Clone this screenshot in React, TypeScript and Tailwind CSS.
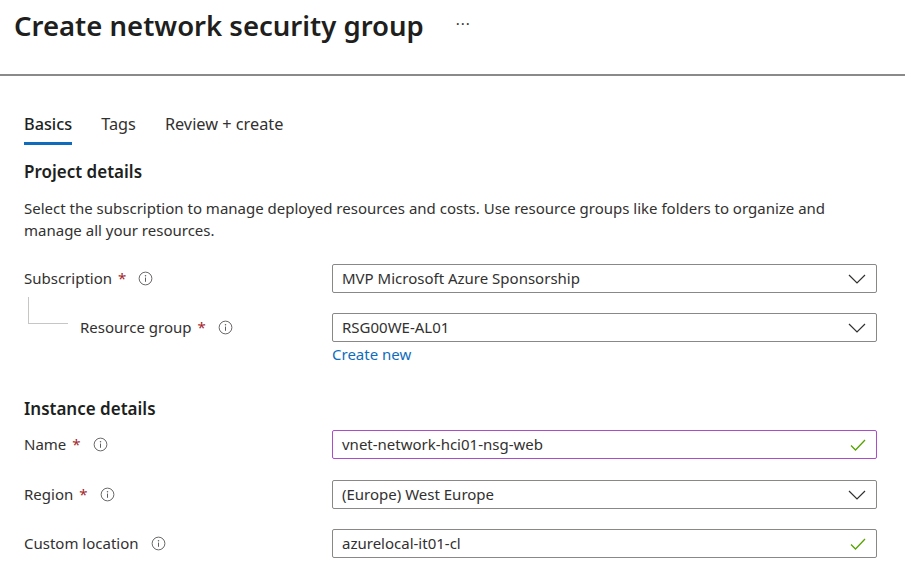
const font = { fontFamily: '"Noto Sans", "Open Sans", sans-serif' };

function InfoIcon() {
  return (
    <svg width="15" height="15" viewBox="0 0 16 16" className="shrink-0">
      <circle cx="8" cy="8" r="6.8" fill="none" stroke="#605e5c" strokeWidth="1" />
      <circle cx="8" cy="5" r="0.8" fill="#605e5c" />
      <path d="M8 7v4.5" stroke="#605e5c" strokeWidth="1.1" />
    </svg>
  );
}

function Chevron() {
  return (
    <svg width="18" height="10" viewBox="0 0 18 10">
      <path d="M1 1l8 8 8-8" fill="none" stroke="#323130" strokeWidth="1.2" />
    </svg>
  );
}

function Check() {
  return (
    <svg width="16" height="12" viewBox="0 0 16 12">
      <path d="M1 6.5l4.5 4.5L15 1" fill="none" stroke="#57a300" strokeWidth="1.3" />
    </svg>
  );
}

function Label({ text, required }: { text: string; required?: boolean }) {
  return (
    <div className="flex items-center text-[15px] text-[#323130]">
      <span>{text}</span>
      {required && <span className="ml-[6px] text-[#a4262c]">*</span>}
      <span className="ml-[12px] flex items-center">
        <InfoIcon />
      </span>
    </div>
  );
}

function Field({ value, kind, focused }: { value: string; kind: 'select' | 'text'; focused?: boolean }) {
  return (
    <div
      className={`flex h-[29px] w-[545px] items-center justify-between rounded-[2px] border pl-[9px] pr-[10px] text-[15px] text-[#323130] ${
        focused ? 'border-[#a94dc8]' : 'border-[#8a8886]'
      }`}
    >
      <span>{value}</span>
      {kind === 'select' ? <Chevron /> : <Check />}
    </div>
  );
}

export default function App() {
  return (
    <div className="h-[585px] w-[905px] overflow-hidden bg-white text-[#323130]" style={font}>
      <div className="flex h-[76px] items-start border-b-2 border-[#8a8a8a] pl-[14px] pt-[6px]">
        <h1 className="text-[27.5px] font-semibold leading-[40px] text-[#201f1e]">Create network security group</h1>
        <span className="ml-[32px] mt-[6px] text-[15px] tracking-[1px] text-[#323130]">···</span>
      </div>

      <div className="px-[24px]">
        <div className="mt-[36px] flex gap-[29px] text-[16.3px]">
          <div className="flex flex-col">
            <span className="font-medium leading-[24px] text-[#201f1e]">Basics</span>
            <span className="mt-[6px] h-[3px] w-full bg-[#0f6cbd]" />
          </div>
          <span className="leading-[24px]">Tags</span>
          <span className="leading-[24px]">Review + create</span>
        </div>

        <h2 className="mt-[15px] text-[17px] font-semibold leading-[24px] text-[#201f1e]">Project details</h2>
        <p className="mt-[13px] text-[15px] leading-[22px]">
          Select the subscription to manage deployed resources and costs. Use resource groups like folders to organize and
          manage all your resources.
        </p>

        <div className="mt-[23px] flex items-center">
          <div className="w-[308px]">
            <Label text="Subscription" required />
          </div>
          <Field value="MVP Microsoft Azure Sponsorship" kind="select" />
        </div>

        <div className="mt-[20px] flex items-start">
          <div className="relative h-[29px] w-[308px]">
            <div className="absolute left-[4px] top-[-16px] h-[27px] w-[40px] border-b border-l border-[#c8c6c4]" />
            <div className="flex h-[29px] items-center pl-[56px]">
              <Label text="Resource group" required />
            </div>
          </div>
          <div className="flex flex-col">
            <Field value="RSG00WE-AL01" kind="select" />
            <span className="mt-[1px] text-[15px] leading-[22px] text-[#0f6cbd]">Create new</span>
          </div>
        </div>

        <h2 className="mt-[32px] text-[17px] font-semibold leading-[24px] text-[#201f1e]">Instance details</h2>

        <div className="mt-[9px] flex items-center">
          <div className="w-[308px]">
            <Label text="Name" required />
          </div>
          <Field value="vnet-network-hci01-nsg-web" kind="text" focused />
        </div>

        <div className="mt-[21px] flex items-center">
          <div className="w-[308px]">
            <Label text="Region" required />
          </div>
          <Field value="(Europe) West Europe" kind="select" />
        </div>

        <div className="mt-[20px] flex items-center">
          <div className="w-[308px]">
            <Label text="Custom location" />
          </div>
          <Field value="azurelocal-it01-cl" kind="text" />
        </div>
      </div>
    </div>
  );
}
